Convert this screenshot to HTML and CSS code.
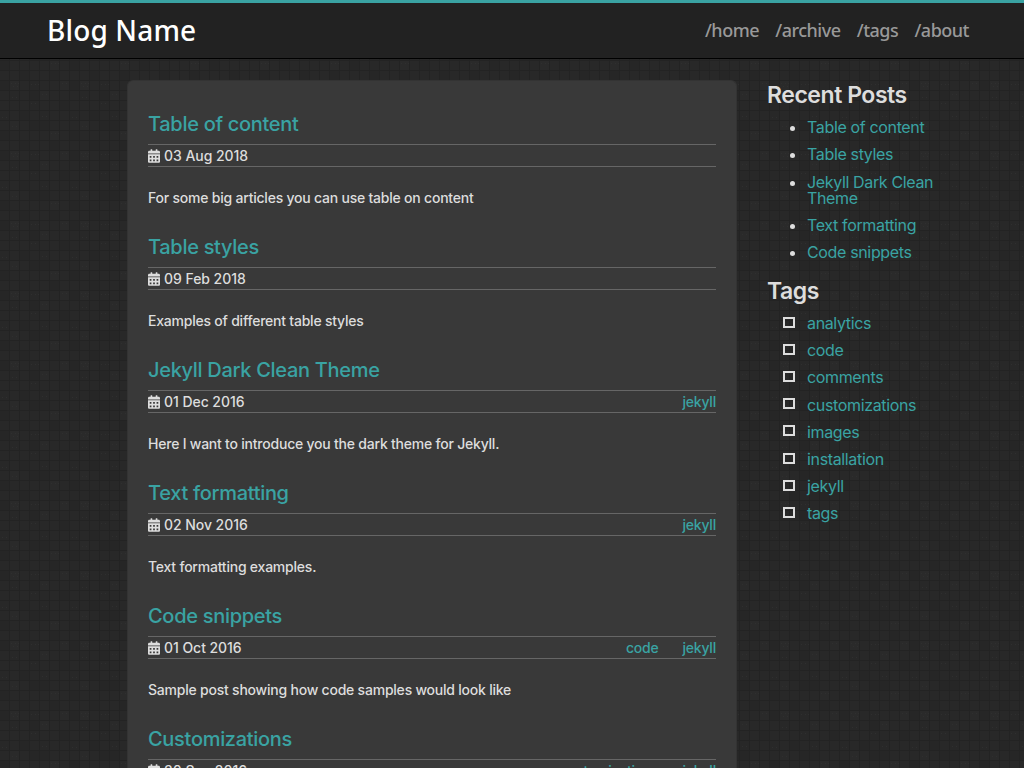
FILE: index.html
```html
<!DOCTYPE html>
<html lang="en">
<head>
<meta charset="utf-8">
<title>Blog Name</title>
<link rel="stylesheet" href="styles.css">
</head>
<body>
<svg class="sprite" width="0" height="0" aria-hidden="true">
  <symbol id="calendar" viewBox="0 0 448 512">
    <path fill-rule="evenodd" d="M0 464c0 26.500 21.500 48 48 48h352c26.500 0 48-21.500 48-48V192H0v272zM64 256h64v64H64v-64zm128 0h64v64h-64v-64zm128 0h64v64h-64v-64zM64 384h64v64H64v-64zm128 0h64v64h-64v-64zm128 0h64v64h-64v-64zM400 64h-48V16c0-8.800-7.200-16-16-16h-32c-8.800 0-16 7.200-16 16v48H160V16c0-8.800-7.200-16-16-16h-32c-8.800 0-16 7.200-16 16v48H48C21.500 64 0 85.500 0 112v48h448v-48c0-26.500-21.500-48-48-48z"/>
  </symbol>
</svg>
<header class="site-header">
  <a class="brand">Blog Name</a>
  <nav class="site-nav"><a>/home</a><a>/archive</a><a>/tags</a><a>/about</a></nav>
</header>
<div class="page">
  <main class="posts">
    <article class="post"><h2>Table of content</h2>
      <div class="meta"><svg class="icon"><use href="#calendar"/></svg><time>03 Aug 2018</time></div>
      <p>For some big articles you can use table on content</p></article>
    <article class="post"><h2>Table styles</h2>
      <div class="meta"><svg class="icon"><use href="#calendar"/></svg><time>09 Feb 2018</time></div>
      <p>Examples of different table styles</p></article>
    <article class="post"><h2>Jekyll Dark Clean Theme</h2>
      <div class="meta"><svg class="icon"><use href="#calendar"/></svg><time>01 Dec 2016</time><span class="labels"><a>jekyll</a></span></div>
      <p>Here I want to introduce you the dark theme for Jekyll.</p></article>
    <article class="post"><h2>Text formatting</h2>
      <div class="meta"><svg class="icon"><use href="#calendar"/></svg><time>02 Nov 2016</time><span class="labels"><a>jekyll</a></span></div>
      <p>Text formatting examples.</p></article>
    <article class="post"><h2>Code snippets</h2>
      <div class="meta"><svg class="icon"><use href="#calendar"/></svg><time>01 Oct 2016</time><span class="labels"><a>code</a><a>jekyll</a></span></div>
      <p>Sample post showing how code samples would look like</p></article>
    <article class="post"><h2>Customizations</h2>
      <div class="meta"><svg class="icon"><use href="#calendar"/></svg><time>30 Sep 2016</time><span class="labels"><a>customizations</a><a>jekyll</a></span></div></article>
  </main>
  <aside class="sidebar">
    <h3>Recent Posts</h3>
    <ul class="recent"><li>Table of content</li><li>Table styles</li><li>Jekyll Dark Clean Theme</li><li>Text formatting</li><li>Code snippets</li></ul>
    <h3>Tags</h3>
    <ul class="tags"><li>analytics</li><li>code</li><li>comments</li><li>customizations</li><li>images</li><li>installation</li><li>jekyll</li><li>tags</li></ul>
  </aside>
</div>
</body>
</html>
```
FILE: styles.css
```css
*, *::before { box-sizing: border-box; }
html { height: 100%; overflow: hidden; }
body {
  margin: 0;
  height: 768px;
  overflow: hidden;
  color: #ddd;
  font: 14px/20px Inter, "Liberation Sans", sans-serif;
  background: #282828 url("data:image/svg+xml,%3Csvg xmlns='http://www.w3.org/2000/svg' width='70' height='70'%3E%3Cpath fill='%23262626' d='M20 0h9v10h-9zM50 0h9v10h-9zM0 10h9v10H0zM30 20h9v10h-9zM60 30h9v10h-9zM20 40h9v10h-9zM30 50h19v10H30zM0 60h9v10H0z'/%3E%3Cpath fill='%232a2a2a' d='M10 10h9v10h-9zM40 20h9v10h-9zM10 50h9v10h-9zM50 60h9v10h-9zM60 10h9v10h-9z'/%3E%3Cpath stroke='%232f2f2f' stroke-dasharray='1 3 1 2' d='M11 13.500h8M13 16.500h6M31 14.500h8M42 24.500h7M12 27.500h6M2 47.500h6M12 56.500h7M42 46.500h6M51 63.500h8M62 13.500h6M31 33.500h7'/%3E%3Cpath stroke='%23232323' d='M9.500 0v70M19.500 0v70M29.500 0v70M39.500 0v70M49.500 0v70M59.500 0v70M69.500 0v70M0 .5h70M0 10.500h70M0 20.500h70M0 30.500h70M0 40.500h70M0 50.500h70M0 60.500h70'/%3E%3C/svg%3E");
}
.sprite { display: block; height: 0; }
.site-header {
  display: flex;
  align-items: center;
  justify-content: space-between;
  height: 59px;
  padding: 0 55px 2px 47px;
  background: #222;
  border-top: 3px solid #3aa3a3;
  border-bottom: 1px solid #000;
  font-family: "Noto Sans", "Open Sans", sans-serif;
}
.brand { color: #fff; font-size: 28px; font-weight: 500; letter-spacing: .15px; }
.site-nav { display: flex; gap: 16.200px; color: #999; font-size: 18px; font-weight: 500; letter-spacing: -.5px; }
.page { display: flex; padding: 21px 0 0 127px; }
.posts {
  width: 610px;
  height: 688px;
  overflow: hidden;
  padding: 28px 20px 0;
  background: #393939;
  border: 1px solid #333;
  border-bottom: 0;
  border-radius: 6px 6px 0 0;
}
.post { height: 123px; letter-spacing: -.22px; font-weight: 450; }
.post h2 { margin: 0; height: 35px; font-size: 20px; line-height: 30px; font-weight: 550; letter-spacing: -.3px; color: #3aa3a3; }
.meta {
  display: flex;
  align-items: center;
  height: 23px;
  border: solid #666;
  border-width: 1px 0;
}
.meta time { letter-spacing: -.05px; }
.icon { width: 12px; height: 14px; margin-right: 4px; fill: #ddd; }
.labels { display: flex; gap: 24px; margin-left: auto; color: #3aa3a3; }
.post p { margin: 21px 0 0; }
.sidebar { width: 190px; margin-left: 30px; font-size: 16px; line-height: 16px; letter-spacing: -.35px; }
.sidebar h3 { margin: 0; font-size: 23px; line-height: 30px; font-weight: 600; letter-spacing: -.45px; }
.sidebar ul { margin: 0; padding: 9.200px 0 0 40px; }
.sidebar li { margin-bottom: 11.200px; color: #3aa3a3; }
.recent li::marker { color: #ddd; }
.sidebar .recent { padding-bottom: 4.800px; }
.tags { list-style: none; }
.tags li { display: flex; align-items: center; }
.tags li::before { content: ""; width: 12px; height: 11px; margin: -2px 12px 0 -24px; border: 2px solid #ddd; }
```
